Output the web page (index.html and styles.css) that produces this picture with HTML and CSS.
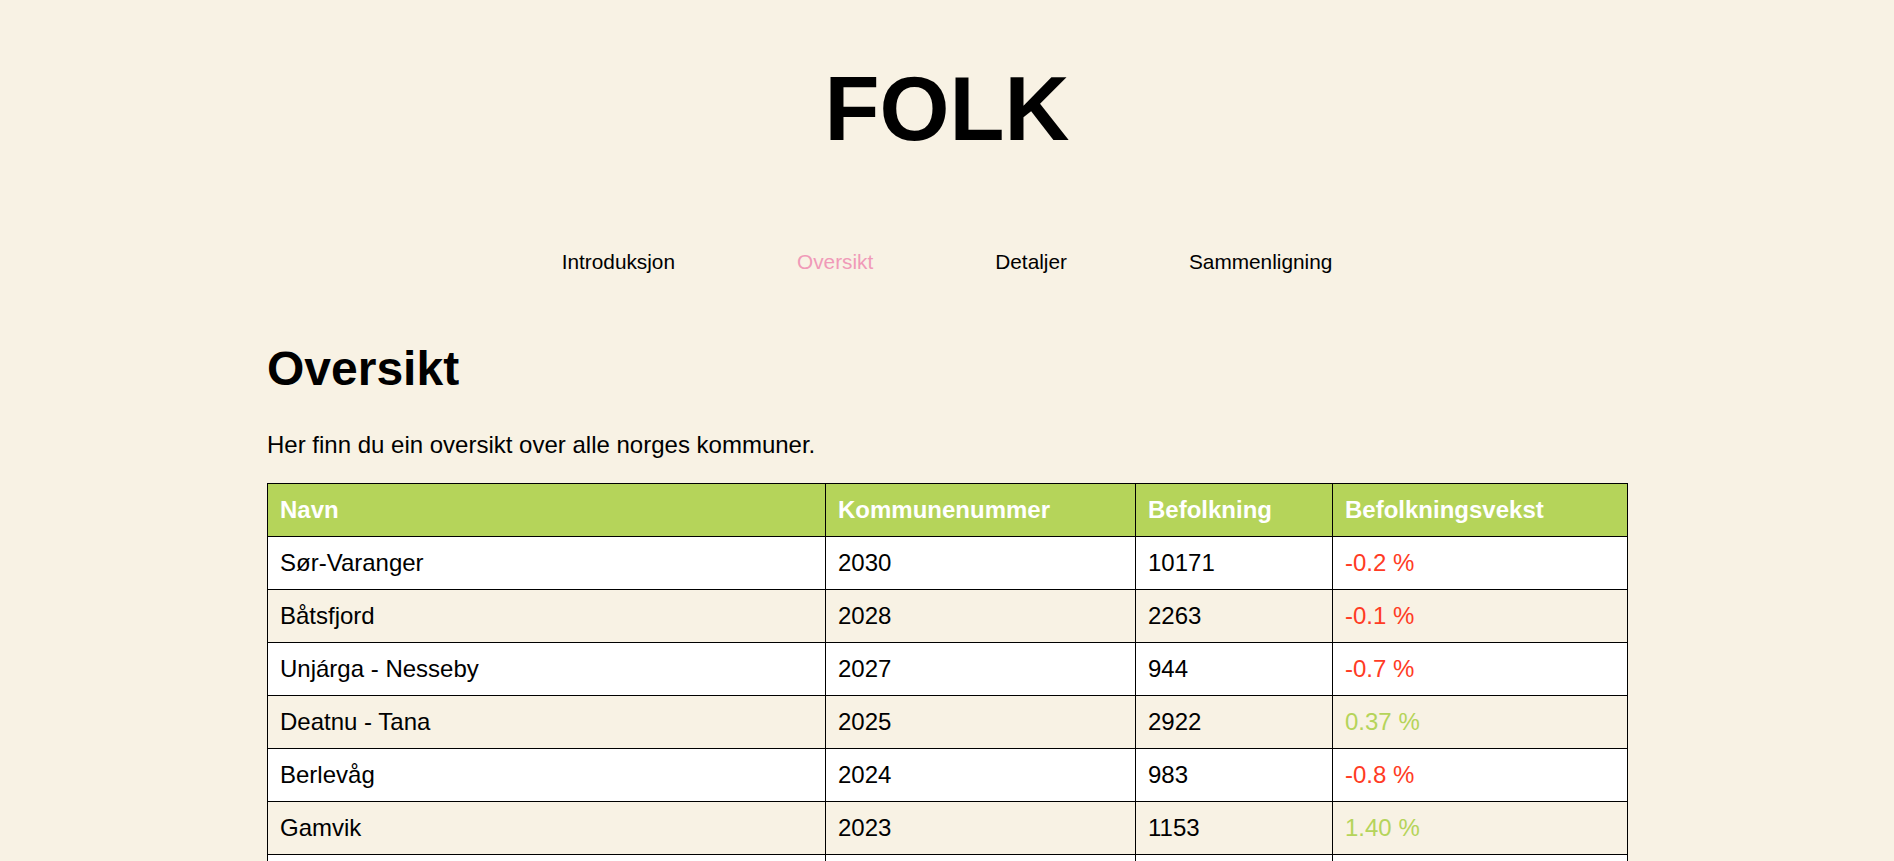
FILE: index.html
```html
<!DOCTYPE html>
<html lang="no">
<head>
<meta charset="utf-8">
<title>FOLK</title>
<link rel="stylesheet" href="styles.css">
</head>
<body>
<header class="site-header">
  <h1 class="logo">FOLK</h1>
  <nav class="nav">
    <a class="nav-link" href="#">Introduksjon</a>
    <a class="nav-link active" href="#">Oversikt</a>
    <a class="nav-link" href="#">Detaljer</a>
    <a class="nav-link" href="#">Sammenligning</a>
  </nav>
</header>
<main class="content">
  <h2 class="title">Oversikt</h2>
  <p class="intro">Her finn du ein oversikt over alle norges kommuner.</p>
  <table class="table">
    <colgroup>
      <col class="c-name">
      <col class="c-num">
      <col class="c-pop">
      <col class="c-growth">
    </colgroup>
    <thead>
      <tr><th>Navn</th><th>Kommunenummer</th><th>Befolkning</th><th>Befolkningsvekst</th></tr>
    </thead>
    <tbody>
      <tr><td>Sør-Varanger</td><td>2030</td><td>10171</td><td class="neg">-0.2 %</td></tr>
      <tr><td>Båtsfjord</td><td>2028</td><td>2263</td><td class="neg">-0.1 %</td></tr>
      <tr><td>Unjárga - Nesseby</td><td>2027</td><td>944</td><td class="neg">-0.7 %</td></tr>
      <tr><td>Deatnu - Tana</td><td>2025</td><td>2922</td><td class="pos">0.37 %</td></tr>
      <tr><td>Berlevåg</td><td>2024</td><td>983</td><td class="neg">-0.8 %</td></tr>
      <tr><td>Gamvik</td><td>2023</td><td>1153</td><td class="pos">1.40 %</td></tr>
      <tr><td>Lebesby</td><td>2022</td><td>1331</td><td class="neg">-0.3 %</td></tr>
      <tr><td>Kárášjohka - Karasjok</td><td>2021</td><td>2705</td><td class="neg">-0.5 %</td></tr>
      <tr><td>Porsanger - Porsáŋgu - Porsanki</td><td>2020</td><td>3959</td><td class="pos">0.12 %</td></tr>
    </tbody>
  </table>
</main>
</body>
</html>
```

FILE: styles.css
```css
html, body {
  margin: 0;
  padding: 0;
}
body {
  background: #f8f2e4;
  color: #000;
  font-family: "Liberation Sans", Arial, sans-serif;
}
.site-header {
  display: flex;
  flex-direction: column;
  align-items: center;
}
.logo {
  margin: 58px 0 0;
  font-size: 90px;
  font-weight: bold;
  line-height: normal;
}
.nav {
  display: flex;
  justify-content: center;
  gap: 122px;
  margin-top: 89px;
}
.nav-link {
  font-size: 20.8px;
  color: #000;
  text-decoration: none;
}
.nav-link.active {
  color: #f09ab8;
}
.content {
  width: 1360px;
  margin: 0 auto;
}
.title {
  font-size: 48px;
  font-weight: bold;
  margin: 67px 0 0;
  line-height: normal;
}
.intro {
  font-size: 24px;
  margin: 35px 0 0;
  line-height: normal;
}
.table {
  margin-top: 24px;
  width: 1360px;
  border-collapse: collapse;
  table-layout: fixed;
  font-size: 24px;
}
.c-name { width: 558px; }
.c-num { width: 310px; }
.c-pop { width: 197px; }
.c-growth { width: 295px; }
.table th,
.table td {
  border: 1px solid #000;
  padding: 12px 12px;
  text-align: left;
  line-height: 28px;
}
.table th {
  background: #b5d45a;
  color: #fff;
  font-weight: bold;
}
.table tbody tr:nth-child(odd) td {
  background: #fff;
}
.table tbody tr:nth-child(even) td {
  background: #f8f2e4;
}
.table td.neg {
  color: #ff3b24;
}
.table td.pos {
  color: #b5d45a;
}
```
